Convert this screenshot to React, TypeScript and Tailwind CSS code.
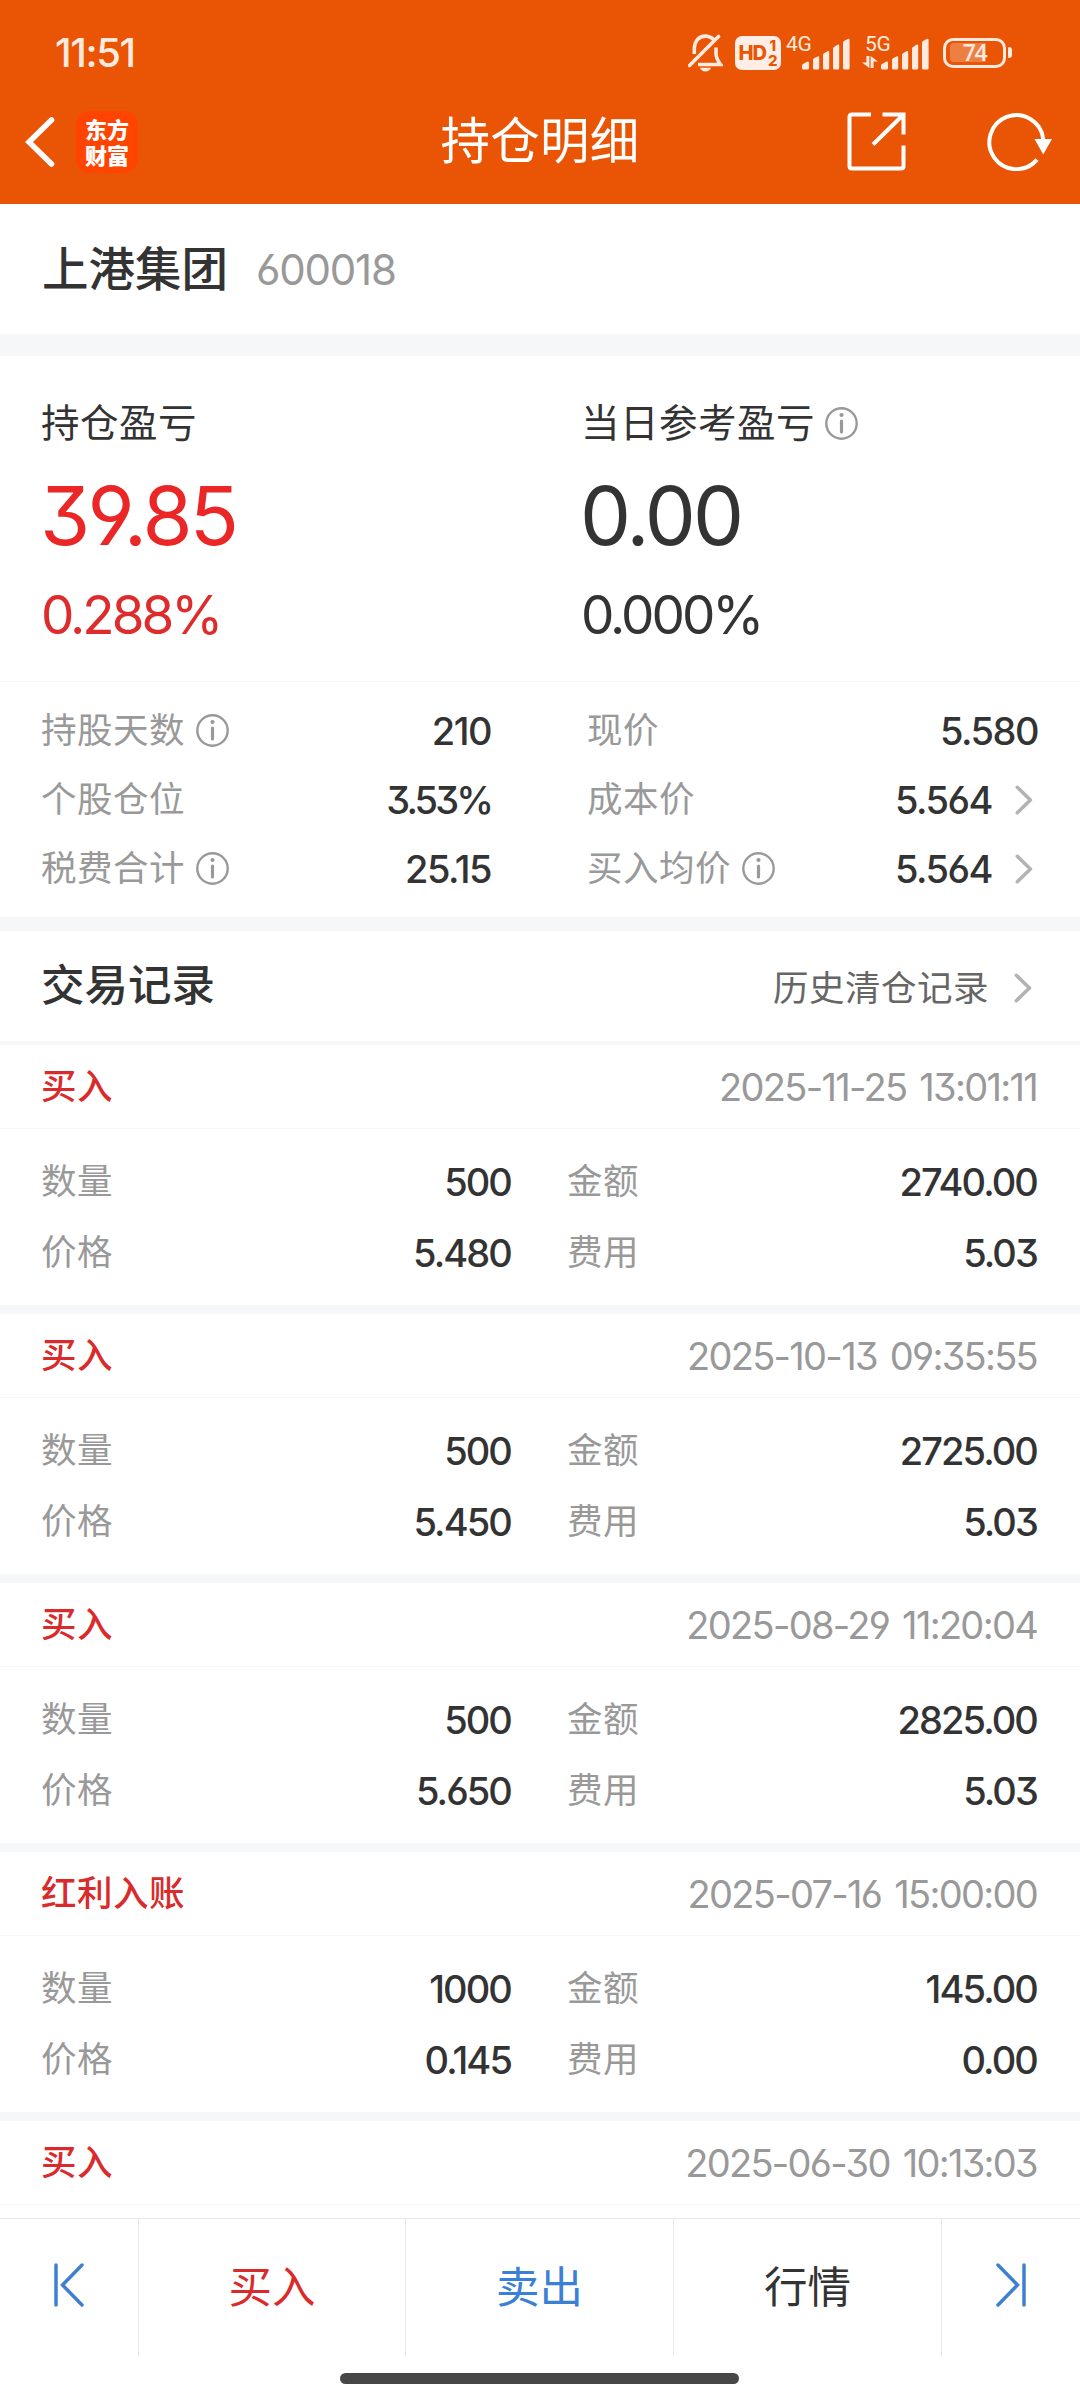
import type { ReactNode } from "react";

const CJK = "font-['Noto_Sans_CJK_SC','Noto_Sans_CJK_TC',sans-serif]";
const NUM = "font-['Inter','Liberation_Sans',sans-serif] [font-feature-settings:'cv03','cv04','cv09'] leading-none whitespace-nowrap";

type Trade = {
  kind: string;
  time: string;
  quantity?: string;
  amount?: string;
  price?: string;
  fee?: string;
};

const trades: Trade[] = [
  { kind: "买入", time: "2025-11-25 13:01:11", quantity: "500", amount: "2740.00", price: "5.480", fee: "5.03" },
  { kind: "买入", time: "2025-10-13 09:35:55", quantity: "500", amount: "2725.00", price: "5.450", fee: "5.03" },
  { kind: "买入", time: "2025-08-29 11:20:04", quantity: "500", amount: "2825.00", price: "5.650", fee: "5.03" },
  { kind: "红利入账", time: "2025-07-16 15:00:00", quantity: "1000", amount: "145.00", price: "0.145", fee: "0.00" },
  { kind: "买入", time: "2025-06-30 10:13:03" },
];

function InfoIcon() {
  return (
    <svg className="size-[33px] shrink-0 text-[#999999]" viewBox="0 0 33 33" fill="none" stroke="currentColor">
      <circle cx="16.5" cy="16.5" r="15.2" strokeWidth="2.4" />
      <circle cx="16.5" cy="8" r="2.1" fill="currentColor" stroke="none" />
      <path d="M16.5 14v11" strokeWidth="3.2" strokeLinecap="round" />
    </svg>
  );
}

function Chevron() {
  return (
    <svg className="h-[30px] w-[18px] shrink-0" viewBox="0 0 18 30" fill="none" stroke="#b3b3b3" strokeWidth="3.6" strokeLinecap="round" strokeLinejoin="round">
      <path d="M2.3 2.3 15.4 15 2.3 27.7" />
    </svg>
  );
}

function Signal({ label, arrows, className }: { label: string; arrows?: boolean; className: string }) {
  return (
    <div className={`relative h-[34px] shrink-0 ${className}`}>
      <span className={`absolute top-[-2px] font-['Roboto',sans-serif] text-[21px] leading-none tracking-[-0.3px] ${arrows ? "left-[3px]" : "left-0"}`}>
        {label}
      </span>
      {arrows && (
        <svg className="absolute bottom-[2px] left-0 h-[12px] w-[16px]" viewBox="0 0 16 12" fill="currentColor">
          <path d="M4.4 0h3v12L0 6.6h4.4zM11.6 12h-3V0L16 5.4h-4.4z" />
        </svg>
      )}
      <svg className="absolute right-0 bottom-0 h-[32px] w-[48px]" viewBox="0 0 48 32" fill="currentColor">
        <path d="M0 27.5Q0 26.5 1 26L5 23.8Q7 23 7 25V30Q7 31.5 5.5 31.5H1.5Q0 31.5 0 30ZM11 22Q11 20.8 12 20.2L15.5 18.4Q17.2 17.7 17.2 19.5V30Q17.2 31.5 15.7 31.5H12.5Q11 31.5 11 30ZM21 17Q21 15.8 22 15.2L25.5 13.2Q27.2 12.4 27.2 14.2V30Q27.2 31.5 25.7 31.5H22.5Q21 31.5 21 30ZM31 11Q31 9.6 32 9L35.5 6.8Q37.2 6 37.2 7.8V30Q37.2 31.5 35.7 31.5H32.5Q31 31.5 31 30ZM41 5Q41 3.6 42 3L45.8 .9Q47.6 .2 47.6 2V30Q47.6 31.5 46.1 31.5H42.5Q41 31.5 41 30Z" />
      </svg>
    </div>
  );
}

function StatusBar() {
  return (
    <div className="flex h-[105px] items-center pr-[68px] pl-[55px] text-[#ffeadf]">
      <span className={`${NUM} text-[40px] font-medium tracking-[-1.4px]`}>11:51</span>
      <div className="ml-auto flex items-center">
        <svg className="mr-[12px] h-[38px] w-[35px]" viewBox="0 0 35 38" fill="none" stroke="currentColor" strokeWidth="3.6">
          <path d="M26.5 6.5C22 .8 13.5 .8 9.5 5.5 6.8 8.5 6.3 11.5 6.3 15.5V20" />
          <path d="M28 13.5V19.5C28 23.5 28.8 25.5 32.5 30.5H10" />
          <path d="M1.5 31.5 30.5 2.5" strokeLinecap="round" />
          <path d="M12 33.8H23Q21.5 37.6 17.5 37.6T12 33.8Z" fill="currentColor" stroke="none" />
        </svg>
        <div className="mr-[5px] flex h-[34px] w-[46px] items-center justify-center rounded-[7px] bg-[#ffeee5] font-['Inter',sans-serif] font-extrabold text-[#e95504]">
          <span className="text-[20px] leading-none tracking-[-1px]">HD</span>
          <span className="ml-[2px] flex flex-col text-[15px] leading-[15px]">
            <span className="text-center">1</span>
            <span>2</span>
          </span>
        </div>
        <Signal label="4G" className="mr-[12px] w-[64px]" />
        <Signal label="5G" arrows className="mr-[14px] w-[67px]" />
        <div className="flex items-center gap-[2px]">
          <div className="relative flex h-[30px] w-[63px] items-center rounded-[10px] border-3 border-current">
            <div className="ml-[4px] h-[19px] w-[36px] rounded-l-[4px] bg-white/25" />
            <span className="absolute inset-0 flex items-center justify-center font-['Open_Sans',sans-serif] text-[23px] leading-none font-semibold tracking-[-1.5px]">74</span>
          </div>
          <div className="h-[11px] w-[4px] rounded-r-[3px] rounded-l-[1px] bg-current" />
        </div>
      </div>
    </div>
  );
}

function Header() {
  return (
    <header className="h-[204px] shrink-0 bg-[#e95504] text-white">
      <StatusBar />
      <div className="grid h-[73px] grid-cols-[1fr_auto_1fr] items-center">
        <div className="flex items-center pl-[24px]">
          <svg className="h-[52px] w-[32px]" viewBox="0 0 32 52" fill="none" stroke="currentColor" strokeWidth="5.5" strokeLinecap="round" strokeLinejoin="miter">
            <path d="M27.5 4 5 26 27.5 48" />
          </svg>
          <div className={`${CJK} ml-[20px] flex size-[62px] flex-col items-center justify-center rounded-[14px] bg-[#ff4400] pb-[2px] text-[22px] leading-[26px] font-black`}>
            <span>东方</span>
            <span>财富</span>
          </div>
        </div>
        <h1 className={`${CJK} pb-[7px] text-[49.5px] leading-none tracking-[0.3px]`}>持仓明细</h1>
        <div className="flex items-center justify-end pr-[27px]">
          <svg className="mr-[81px] size-[59px]" viewBox="0 0 59 59" fill="none" stroke="currentColor" strokeWidth="4">
            <path d="M24 2.5H5Q2.5 2.5 2.5 5V54Q2.5 56.5 5 56.5H54Q56.5 56.5 56.5 54V33.5M35.5 2.5H56.5V22.5M56 3 26 32.5" />
          </svg>
          <svg className="h-[59px] w-[66px]" viewBox="0 0 66 59" fill="none" stroke="currentColor" strokeWidth="4">
            <path d="M50 47.6A27 27 0 1 1 56.2 27" />
            <path d="M47.5 27H65L56.2 42.5Z" fill="currentColor" stroke="none" />
          </svg>
        </div>
      </div>
    </header>
  );
}

function ProfitColumn({ title, value, percent, info, valueClass, percentClass }: { title: string; value: string; percent: string; info?: boolean; valueClass: string; percentClass: string }) {
  return (
    <div className="flex flex-1 flex-col pl-[41px]">
      <div className="flex h-[60px] items-center gap-[10px]">
        <span className={`${CJK} pb-[6px] text-[38.5px] leading-none tracking-[0.5px] text-[#333333]`}>{title}</span>
        {info && <InfoIcon />}
      </div>
      <span className={`${NUM} mt-[13px] -ml-px flex h-[100px] items-center text-[81px] tracking-[-2.8px] ${valueClass}`}>{value}</span>
      <span className={`${NUM} mt-[19px] flex h-[60px] items-center text-[53px] tracking-[-3px] ${percentClass}`}>{percent}</span>
    </div>
  );
}

function Stat({ label, value, info, link }: { label: string; value: string; info?: boolean; link?: boolean }) {
  return (
    <div className="flex h-[69px] items-center">
      <span className={`${CJK} -ml-px pb-[6px] text-[35.5px] leading-none tracking-[0.5px] text-[#999999]`}>{label}</span>
      {info && <span className="ml-[11px]"><InfoIcon /></span>}
      <span className={`${NUM} ml-auto text-[38px] font-medium text-[#333333] ${value.endsWith("%") ? "tracking-[-2.9px]" : "tracking-[-1.5px]"}`}>{value}</span>
      {link && <span className="mr-[5px] ml-[23px]"><Chevron /></span>}
    </div>
  );
}

function Field({ label, value }: { label: string; value: string }) {
  return (
    <div className="flex items-center justify-between">
      <span className={`${CJK} -ml-px pb-[6px] text-[35.5px] leading-none tracking-[0.5px] text-[#999999]`}>{label}</span>
      <span className={`${NUM} text-[38px] font-medium tracking-[-1.9px] text-[#333333]`}>{value}</span>
    </div>
  );
}

function TradeCard({ trade }: { trade: Trade }) {
  return (
    <article className="h-[269px] border-b-[9px] border-[#f6f7f9]">
      <div className="flex h-[84px] items-center justify-between border-b border-[#f6f7f8] pr-[43px] pl-[41px]">
        <span className={`${CJK} pb-[6px] text-[35.5px] leading-none font-medium tracking-[0.5px] text-[#d92b2b]`}>{trade.kind}</span>
        <time className={`${NUM} text-[38px] tracking-[-1.7px] text-[#999999] [word-spacing:4px]`}>{trade.time}</time>
      </div>
      {trade.quantity && (
        <div className="grid grid-cols-[469px_469px] grid-rows-[71px_72px] gap-x-[57px] pt-[17px] pl-[42px]">
          <Field label="数量" value={trade.quantity} />
          <Field label="金额" value={trade.amount!} />
          <Field label="价格" value={trade.price!} />
          <Field label="费用" value={trade.fee!} />
        </div>
      )}
    </article>
  );
}

function Divider({ className }: { className: string }) {
  return <div className={`shrink-0 bg-[#f6f7f9] ${className}`} />;
}

function Tab({ children, className }: { children: ReactNode; className: string }) {
  return <button className={`${CJK} flex h-[137px] items-center justify-center border-r border-[#e9e9e9] pb-[6px] text-[43.5px] leading-none ${className}`}>{children}</button>;
}

function BottomBar() {
  return (
    <footer className="h-[182px] shrink-0 border-t border-[#e9e9e9] bg-white">
      <nav className="grid grid-cols-[139px_267px_268px_268px_138px]">
        <Tab className="text-[#3e80cf]">
          <svg className="h-[44px] w-[30px]" viewBox="0 0 30 44" fill="none" stroke="currentColor" strokeWidth="3.5" strokeLinecap="round">
            <path d="M2 2V42M28 2 8.5 22 28 42" />
          </svg>
        </Tab>
        <Tab className="text-[#d92b2b]">买入</Tab>
        <Tab className="text-[#3a80d4]">卖出</Tab>
        <Tab className="text-[#333333]">行情</Tab>
        <Tab className="border-r-0 text-[#3e80cf]">
          <svg className="h-[44px] w-[30px]" viewBox="0 0 30 44" fill="none" stroke="currentColor" strokeWidth="3.5" strokeLinecap="round">
            <path d="M28 2V42M2 2 21.5 22 2 42" />
          </svg>
        </Tab>
      </nav>
      <div className="mt-[17px] ml-[340px] h-[11px] w-[399px] rounded-full bg-[#474747]" />
    </footer>
  );
}

export default function App() {
  return (
    <div className="flex h-[2400px] w-[1080px] flex-col overflow-hidden bg-white">
      <Header />
      <main className="flex min-h-0 flex-1 flex-col overflow-hidden">
        <section className="flex h-[130px] shrink-0 items-center gap-[28px] pl-[42px]">
          <h2 className={`${CJK} pb-[6px] text-[46.5px] leading-none font-[450] text-[#333333]`}>上港集团</h2>
          <span className={`${NUM} pt-px text-[42px] tracking-[-1.2px] text-[#999999]`}>600018</span>
        </section>
        <Divider className="h-[22px]" />
        <section className="flex h-[326px] shrink-0 border-b border-[#f6f7f8] pt-[37px]">
          <ProfitColumn title="持仓盈亏" value="39.85" percent="0.288%" valueClass="text-[#ea2626]" percentClass="text-[#de2c2c]" />
          <ProfitColumn title="当日参考盈亏" value="0.00" percent="0.000%" info valueClass="text-[#333333]" percentClass="text-[#333333]" />
        </section>
        <section className="grid h-[235px] shrink-0 grid-cols-[449px_450px] gap-x-[97px] pt-[14px] pl-[42px]">
          <div>
            <Stat label="持股天数" value="210" info />
            <Stat label="个股仓位" value="3.53%" />
            <Stat label="税费合计" value="25.15" info />
          </div>
          <div>
            <Stat label="现价" value="5.580" />
            <Stat label="成本价" value="5.564" link />
            <Stat label="买入均价" value="5.564" info link />
          </div>
        </section>
        <Divider className="h-[14px]" />
        <section className="flex h-[110px] shrink-0 items-center justify-between pr-[48px] pl-[41px]">
          <h2 className={`${CJK} pb-[7px] text-[43.5px] leading-none font-[450] text-[#333333]`}>交易记录</h2>
          <div className="flex items-center gap-[25px] pt-[4px]">
            <span className={`${CJK} pb-[5px] text-[35.5px] leading-none tracking-[0.5px] text-[#666666]`}>历史清仓记录</span>
            <Chevron />
          </div>
        </section>
        <Divider className="h-[4px]" />
        <section>
          {trades.map((trade) => (
            <TradeCard key={trade.time} trade={trade} />
          ))}
        </section>
      </main>
      <BottomBar />
    </div>
  );
}
